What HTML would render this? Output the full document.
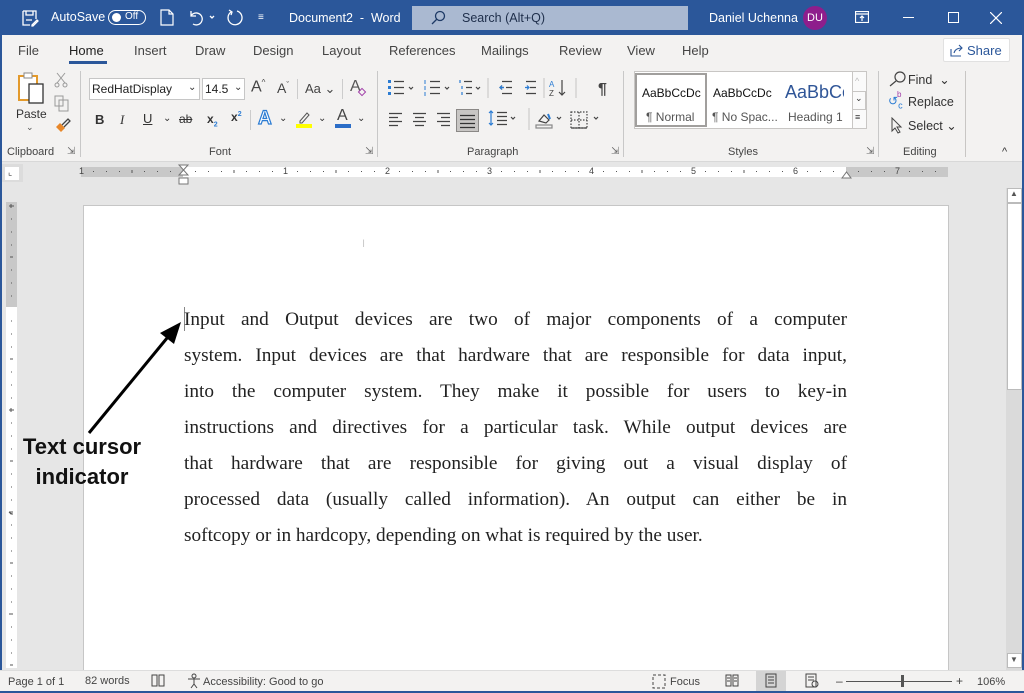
<!DOCTYPE html>
<html><head><meta charset="utf-8">
<style>
*{margin:0;padding:0;box-sizing:border-box}
body{width:1024px;height:693px;position:relative;overflow:hidden;background:#e6e6e6;font-family:"Liberation Sans",sans-serif;color:#333}
.a{position:absolute}
.t{position:absolute;white-space:nowrap}
#title{left:0;top:0;width:1024px;height:35px;background:#2b579a;color:#fff;font-size:12px}
#ribbon{left:0;top:35px;width:1024px;height:127px;background:#f3f2f1;border-bottom:1px solid #d8d8d8}
.tab{position:absolute;top:8px;font-size:13px;color:#444}
.grp{position:absolute;top:146px;font-size:11px;color:#444}
.sep{position:absolute;top:71px;width:1px;height:86px;background:#c8c8c8}
.line{position:absolute;left:184px;width:663px;font-family:"Liberation Serif",serif;font-size:19.3px;color:#222;text-align:justify;text-align-last:justify;white-space:nowrap;height:24px;line-height:24px}
</style></head><body>
<div id="title" class="a">
 <svg class="a" style="left:21px;top:9px" width="18" height="18" viewBox="0 0 18 18" fill="none" stroke="#fff" stroke-width="1.3"><path d="M2 2h13v8M2 2v14h7M5 2v4h7V2M5 11h6M11 16l5-5 1 1-5 5h-1z"/></svg>
 <div class="t" style="left:51px;top:10px;font-size:12.5px">AutoSave</div>
 <div class="a" style="left:108px;top:10px;width:38px;height:15px;border:1px solid #fff;border-radius:8px"></div>
 <div class="a" style="left:112px;top:13px;width:9px;height:9px;background:#fff;border-radius:50%"></div>
 <div class="t" style="left:125px;top:11px;font-size:10px">Off</div>
 <svg class="a" style="left:160px;top:9px" width="14" height="17" viewBox="0 0 14 17" fill="none" stroke="#fff" stroke-width="1.2"><path d="M1 1h8l4 4v11H1zM9 1v4h4"/></svg>
 <svg class="a" style="left:187px;top:9px" width="40" height="17" viewBox="0 0 40 17" fill="none" stroke="#fff" stroke-width="1.3"><path d="M4 2v5h5M4 7a6 6 0 1 1 2 8"/><path d="M23 7l2 2 2-2" /></svg>
 <svg class="a" style="left:226px;top:9px" width="18" height="18" viewBox="0 0 18 18" fill="none" stroke="#fff" stroke-width="1.3"><path d="M11 2a7 7 0 1 1-6 1"/><path d="M3 1l3 2-1 3"/></svg>
 <div class="t" style="left:258px;top:12px;font-size:10px">&#8801;</div>
 <div class="t" style="left:289px;top:11px;font-size:12.5px">Document2&nbsp; - &nbsp;Word</div>
 <div class="a" style="left:412px;top:6px;width:276px;height:24px;background:#aab9d1"></div>
 <svg class="a" style="left:430px;top:10px" width="16" height="16" viewBox="0 0 16 16" fill="none" stroke="#1e3a66" stroke-width="1.3"><circle cx="10" cy="6" r="4.5"/><path d="M7 9l-5 5"/></svg>
 <div class="t" style="left:462px;top:11px;font-size:12.5px;color:#1e2e4a">Search (Alt+Q)</div>
 <div class="t" style="left:709px;top:11px;font-size:12.5px">Daniel Uchenna</div>
 <div class="a" style="left:803px;top:6px;width:24px;height:24px;border-radius:50%;background:#8e1e8c;color:#fff;font-size:11px;text-align:center;line-height:24px">DU</div>
 <svg class="a" style="left:855px;top:11px" width="14" height="12" viewBox="0 0 14 12" fill="none" stroke="#fff" stroke-width="1.2"><rect x="0.5" y="0.5" width="13" height="11"/><path d="M0 3h14M7 10V5M5 7l2-2 2 2"/></svg>
 <div class="a" style="left:903px;top:17px;width:11px;height:1px;background:#fff"></div>
 <div class="a" style="left:948px;top:12px;width:11px;height:11px;border:1px solid #fff"></div>
 <svg class="a" style="left:990px;top:12px" width="12" height="12" viewBox="0 0 12 12" stroke="#fff" stroke-width="1.2"><path d="M0 0l12 12M12 0L0 12"/></svg>
</div>
<div id="ribbon" class="a">
 <div class="tab" style="left:18px">File</div>
 <div class="tab" style="left:69px;color:#222">Home</div>
 <div class="a" style="left:69px;top:26px;width:38px;height:3px;background:#2b579a"></div>
 <div class="tab" style="left:134px">Insert</div>
 <div class="tab" style="left:195px">Draw</div>
 <div class="tab" style="left:253px">Design</div>
 <div class="tab" style="left:322px">Layout</div>
 <div class="tab" style="left:389px">References</div>
 <div class="tab" style="left:481px">Mailings</div>
 <div class="tab" style="left:559px">Review</div>
 <div class="tab" style="left:627px">View</div>
 <div class="tab" style="left:682px">Help</div>
 <div class="a" style="left:943px;top:3px;width:67px;height:24px;background:#fff;border:1px solid #e1e1e1;border-radius:2px"></div>
 <svg class="a" style="left:950px;top:9px" width="14" height="13" viewBox="0 0 14 13" fill="none" stroke="#2b579a" stroke-width="1.1"><path d="M1 5v7h10M4 9c1-4 4-5 8-5M9 1l3 3-3 3"/></svg>
 <div class="t" style="left:967px;top:8px;font-size:13px;color:#2b579a">Share</div>
</div>
<!-- clipboard -->
<svg class="a" style="left:17px;top:72px" width="30" height="34" viewBox="0 0 30 34"><rect x="2" y="4" width="18" height="24" fill="#fff" stroke="#e39a2c" stroke-width="2"/><rect x="7" y="1" width="8" height="5" fill="#fff" stroke="#888"/><rect x="12" y="12" width="14" height="19" fill="#fff" stroke="#333" stroke-width="1.3"/></svg>
<div class="t" style="left:16px;top:107px;font-size:12px;color:#333">Paste</div>
<div class="t" style="left:26px;top:122px;font-size:9px;color:#555">&#8964;</div>
<svg class="a" style="left:54px;top:72px" width="14" height="16" viewBox="0 0 14 16" fill="none" stroke="#999"><path d="M3 1l8 10M11 1L3 11"/><circle cx="3" cy="13" r="2"/><circle cx="11" cy="13" r="2"/></svg>
<svg class="a" style="left:54px;top:95px" width="16" height="17" viewBox="0 0 16 17" fill="none" stroke="#999"><rect x="1" y="1" width="8" height="10"/><path d="M5 5h9v11H5z"/></svg>
<svg class="a" style="left:54px;top:118px" width="17" height="16" viewBox="0 0 17 16"><path d="M2 9l5 5 4-4-5-5z" fill="#e8872a"/><path d="M8 7l6-6 2 2-6 6" stroke="#444" fill="none" stroke-width="1.3"/></svg>
<div class="grp" style="left:7px">Clipboard</div>
<div class="t" style="left:67px;top:146px;font-size:10px;color:#666">&#8690;</div>
<div class="sep" style="left:80px"></div>
<!-- font -->
<div class="a" style="left:89px;top:78px;width:111px;height:22px;background:#fff;border:1px solid #c6c6c6"></div>
<div class="t" style="left:92px;top:82px;font-size:12px;color:#222">RedHatDisplay</div>
<div class="t" style="left:188px;top:82px;font-size:10px">&#8964;</div>
<div class="a" style="left:202px;top:78px;width:43px;height:22px;background:#fff;border:1px solid #c6c6c6"></div>
<div class="t" style="left:205px;top:82px;font-size:12px;color:#222">14.5</div>
<div class="t" style="left:234px;top:82px;font-size:10px">&#8964;</div>
<div class="t" style="left:251px;top:78px;font-size:16px;color:#444">A<sup style="font-size:8px">^</sup></div>
<div class="t" style="left:277px;top:80px;font-size:14px;color:#444">A<sup style="font-size:8px">ˇ</sup></div>
<div class="a" style="left:297px;top:79px;width:1px;height:20px;background:#ccc"></div>
<div class="t" style="left:305px;top:81px;font-size:13px;color:#444">Aa &#8964;</div>
<div class="a" style="left:342px;top:79px;width:1px;height:20px;background:#ccc"></div>
<div class="t" style="left:350px;top:78px;font-size:16px;color:#555">A</div>
<div class="a" style="left:359px;top:89px;width:6px;height:6px;border:1.5px solid #a03ea8;transform:rotate(45deg)"></div>
<div class="t" style="left:95px;top:112px;font-size:13px;font-weight:bold;color:#333">B</div>
<div class="t" style="left:120px;top:112px;font-size:13px;font-style:italic;font-family:'Liberation Serif',serif">I</div>
<div class="t" style="left:143px;top:111px;font-size:13px;text-decoration:underline">U</div>
<div class="t" style="left:163px;top:113px;font-size:10px">&#8964;</div>
<div class="t" style="left:179px;top:112px;font-size:12px;text-decoration:line-through">ab</div>
<div class="t" style="left:207px;top:112px;font-size:12px;font-weight:bold">x<sub style="font-size:7px;color:#2b7cd3">2</sub></div>
<div class="t" style="left:231px;top:110px;font-size:12px;font-weight:bold">x<sup style="font-size:7px;color:#2b7cd3">2</sup></div>
<div class="a" style="left:250px;top:110px;width:1px;height:20px;background:#ccc"></div>
<div class="t" style="left:258px;top:108px;font-size:19px;font-weight:bold;color:#fff;-webkit-text-stroke:1.2px #2b7cd3">A</div>
<div class="t" style="left:279px;top:113px;font-size:10px">&#8964;</div>
<svg class="a" style="left:296px;top:110px" width="18" height="18" viewBox="0 0 18 18"><path d="M4 11l7-8 2 2-7 8H4z" fill="none" stroke="#555"/><rect x="0" y="14" width="16" height="4" fill="#ffff00"/></svg>
<div class="t" style="left:318px;top:113px;font-size:10px">&#8964;</div>
<div class="t" style="left:337px;top:107px;font-size:16px;color:#444">A</div>
<div class="a" style="left:335px;top:124px;width:16px;height:4px;background:#2b6dc7"></div>
<div class="t" style="left:357px;top:113px;font-size:10px">&#8964;</div>
<div class="grp" style="left:209px">Font</div>
<div class="t" style="left:365px;top:146px;font-size:10px;color:#666">&#8690;</div>
<div class="sep" style="left:377px"></div>
<!-- paragraph -->
<svg class="a" style="left:386px;top:78px" width="240" height="52" viewBox="0 0 240 52" fill="none" stroke="#444" stroke-width="1.2">
 <rect x="2" y="2" width="3" height="3" fill="#2b7cd3" stroke="none"/><rect x="2" y="8" width="3" height="3" fill="#2b7cd3" stroke="none"/><rect x="2" y="14" width="3" height="3" fill="#2b7cd3" stroke="none"/>
 <path d="M8 3.5h10M8 9.5h10M8 15.5h10M23 9l2 2 2-2"/>
 <path d="M44 3.5h10M44 9.5h10M44 15.5h10M59 9l2 2 2-2"/><path d="M39 2v4M39 8v4M39 14v4" stroke="#2b7cd3" stroke-width="1"/>
 <path d="M78 3.5h8M80 9.5h6M80 15.5h6M90 9l2 2 2-2"/><path d="M74 2v3M76 8v3M76 14v3" stroke="#2b7cd3"/>
 <path d="M102 0v20" stroke="#ccc"/>
 <path d="M126 3.5h-10M126 9.5h-6M126 15.5h-10M114 9.5h4M116 7.5l-2 2 2 2" /><path d="M114 9.5h4M116 7.5l-2 2 2 2" stroke="#2b7cd3"/>
 <path d="M150 3.5h-10M150 9.5h-6M150 15.5h-10"/><path d="M139 9.5h4M141 7.5l2 2-2 2" stroke="#2b7cd3"/>
 <path d="M158 0v20" stroke="#ccc"/>
 <text x="163" y="9" font-size="8" fill="#2b7cd3" stroke="none" font-family="Liberation Sans">A</text><text x="163" y="18" font-size="8" fill="#444" stroke="none" font-family="Liberation Sans">Z</text>
 <path d="M176 2v15M173 14l3 3 3-3"/>
 <path d="M190 0v20" stroke="#ccc"/>
 <text x="212" y="16" font-size="16" fill="#444" stroke="none" font-family="Liberation Sans" font-weight="bold">¶</text>
 <path d="M3 35.5h13M3 39.5h9M3 43.5h13M3 47.5h9"/>
 <path d="M27 35.5h13M29 39.5h9M27 43.5h13M29 47.5h9"/>
 <path d="M51 35.5h13M55 39.5h9M51 43.5h13M55 47.5h9"/>
</svg>
<div class="a" style="left:456px;top:109px;width:23px;height:23px;background:#c8c6c4;border:1px solid #8a8886"></div>
<svg class="a" style="left:459px;top:113px" width="18" height="16" fill="none" stroke="#333" stroke-width="1.2"><path d="M1 2.5h15M1 6.5h15M1 10.5h15M1 14.5h15"/></svg>
<svg class="a" style="left:486px;top:108px" width="140" height="24" viewBox="0 0 140 24" fill="none" stroke="#444" stroke-width="1.2">
 <path d="M11 4.5h10M11 8.5h10M11 12.5h10M11 16.5h10M25 9l2 2 2-2"/><path d="M5 3v14M3 5l2-2 2 2M3 15l2 2 2-2" stroke="#2b7cd3"/>
 <path d="M43 0v22" stroke="#ccc"/>
 <path d="M53 13l5-6 5 5-3 3z"/><rect x="50" y="17" width="16" height="3" stroke="#888"/><path d="M62 6l2 5" stroke="#2b7cd3" stroke-width="2"/>
 <path d="M71 9l2 2 2-2"/>
 <path d="M85 4h16v16H85z" stroke-dasharray="1.5 1.5"/><path d="M93 4v16M85 12h16" stroke-dasharray="1.5 1.5"/><path d="M85 20h16"/>
 <path d="M108 9l2 2 2-2"/>
</svg>
<div class="grp" style="left:467px">Paragraph</div>
<div class="t" style="left:611px;top:146px;font-size:10px;color:#666">&#8690;</div>
<div class="sep" style="left:623px"></div>
<!-- styles -->
<div class="a" style="left:634px;top:71px;width:233px;height:58px;background:#fff;border:1px solid #c8c6c4"></div>
<div class="a" style="left:635px;top:73px;width:72px;height:54px;border:2px solid #a19f9d;background:#fff"></div>
<div class="t" style="left:642px;top:86px;font-size:12px;color:#111">AaBbCcDc</div>
<div class="t" style="left:646px;top:110px;font-size:12px;color:#555">¶ Normal</div>
<div class="t" style="left:713px;top:86px;font-size:12px;color:#111">AaBbCcDc</div>
<div class="t" style="left:712px;top:110px;font-size:12px;color:#555">¶ No Spac...</div>
<div class="t" style="left:785px;top:82px;font-size:18px;color:#2f5597;width:59px;overflow:hidden">AaBbCc</div>
<div class="t" style="left:788px;top:110px;font-size:12px;color:#555">Heading 1</div>
<div class="a" style="left:852px;top:72px;width:14px;height:56px;border-left:1px solid #c8c6c4;background:#fafafa"></div>
<div class="a" style="left:852px;top:91px;width:14px;height:19px;border:1px solid #c8c6c4"></div>
<div class="t" style="left:855px;top:76px;font-size:9px;color:#bbb">^</div>
<div class="t" style="left:855px;top:93px;font-size:9px">&#8964;</div>
<div class="t" style="left:855px;top:112px;font-size:9px">&#8801;</div>
<div class="grp" style="left:728px">Styles</div>
<div class="t" style="left:866px;top:146px;font-size:10px;color:#666">&#8690;</div>
<div class="sep" style="left:878px"></div>
<!-- editing -->
<svg class="a" style="left:889px;top:71px" width="18" height="16" viewBox="0 0 18 16" fill="none" stroke="#444" stroke-width="1.2"><circle cx="11" cy="6" r="5"/><path d="M7 10l-6 5"/></svg>
<div class="t" style="left:908px;top:72px;font-size:12.5px">Find &nbsp;&#8964;</div>
<div class="t" style="left:888px;top:94px;font-size:12px;color:#2b7cd3">&#8634;<sub style="font-size:9px">c</sub></div>
<div class="t" style="left:897px;top:90px;font-size:8px;color:#a03ea8">b</div>
<div class="t" style="left:908px;top:95px;font-size:12.5px">Replace</div>
<svg class="a" style="left:890px;top:117px" width="14" height="17" viewBox="0 0 14 17" fill="none" stroke="#444"><path d="M2 1v13l3-3 3 5 2-1-3-5h4z"/></svg>
<div class="t" style="left:908px;top:118px;font-size:12.5px">Select &#8964;</div>
<div class="grp" style="left:903px">Editing</div>
<div class="a" style="left:965px;top:71px;width:1px;height:86px;background:#c8c6c4"></div>
<div class="t" style="left:1002px;top:146px;font-size:11px">^</div>
<!-- ruler -->
<div class="a" style="left:0;top:163px;width:1024px;height:18px;background:#e6e6e6"></div>
<div class="a" style="left:2px;top:164px;width:21px;height:18px;background:#dcdcdc"></div>
<div class="a" style="left:5px;top:167px;width:14px;height:13px;background:#fff"></div>
<div class="t" style="left:8px;top:167px;font-size:9px;color:#444">&#8990;</div>
<div class="a" style="left:81px;top:167px;width:102px;height:10px;background:#c8c8c8"></div>
<div class="a" style="left:183px;top:167px;width:663px;height:10px;background:#fff"></div>
<div class="a" style="left:846px;top:167px;width:102px;height:10px;background:#c8c8c8"></div>
<div class="t" style="left:79px;top:166px;font-size:9px;color:#444;letter-spacing:0">1</div>
<div class="t" style="left:283px;top:166px;font-size:9px;color:#444">1</div>
<div class="t" style="left:385px;top:166px;font-size:9px;color:#444">2</div>
<div class="t" style="left:487px;top:166px;font-size:9px;color:#444">3</div>
<div class="t" style="left:589px;top:166px;font-size:9px;color:#444">4</div>
<div class="t" style="left:691px;top:166px;font-size:9px;color:#444">5</div>
<div class="t" style="left:793px;top:166px;font-size:9px;color:#444">6</div>
<div class="t" style="left:895px;top:166px;font-size:9px;color:#444">7</div>
<svg class="a" style="left:80px;top:167px" width="870" height="10"><g stroke="#555">
<path d="M13 4.5h1M26 4.5h1M39 4.5h1M52 3v3M64 4.5h1M77 4.5h1M90 4.5h1M115 4.5h1M128 4.5h1M141 4.5h1M154 3v3M166 4.5h1M179 4.5h1M192 4.5h1M217 4.5h1M230 4.5h1M243 4.5h1M256 3v3M268 4.5h1M281 4.5h1M294 4.5h1M319 4.5h1M332 4.5h1M345 4.5h1M358 3v3M370 4.5h1M383 4.5h1M396 4.5h1M421 4.5h1M434 4.5h1M447 4.5h1M460 3v3M472 4.5h1M485 4.5h1M498 4.5h1M523 4.5h1M536 4.5h1M549 4.5h1M562 3v3M574 4.5h1M587 4.5h1M600 4.5h1M625 4.5h1M638 4.5h1M651 4.5h1M664 3v3M676 4.5h1M689 4.5h1M702 4.5h1M727 4.5h1M740 4.5h1M753 4.5h1M778 4.5h1M791 4.5h1M804 4.5h1M829 4.5h1M842 4.5h1M855 4.5h1"/></g></svg>
<svg class="a" style="left:178px;top:164px" width="12" height="22" fill="#fff" stroke="#777"><path d="M1 1h9L5.5 6zM5.5 6L1 11h9z"/><rect x="1" y="14" width="9" height="6"/></svg>
<svg class="a" style="left:841px;top:170px" width="12" height="9" fill="#fff" stroke="#777"><path d="M1 8L5.5 2 10 8z"/></svg>
<!-- vertical ruler -->
<div class="a" style="left:6px;top:202px;width:11px;height:466px;background:#fff"></div>
<div class="a" style="left:6px;top:202px;width:11px;height:105px;background:#c8c8c8"></div>
<svg class="a" style="left:6px;top:202px" width="11" height="466"><g stroke="#555"><path d="M5 17h1M5 30h1M5 43h1M4 55h3M5 68h1M5 81h1M5 94h1M5 119h1M5 132h1M5 145h1M4 157h3M5 170h1M5 183h1M5 196h1M5 221h1M5 234h1M5 247h1M4 259h3M5 272h1M5 285h1M5 298h1M5 323h1M5 336h1M5 349h1M4 361h3M5 374h1M5 387h1M5 400h1M5 425h1M5 438h1M5 451h1M4 463h3"/><path d="M3 4h5M5 2v4M3 208h5M5 206v4M3 310h4M3 310l2 2h2M3 412h4"/></g></svg>
<!-- page -->
<div class="a" style="left:83px;top:205px;width:866px;height:466px;background:#fff;border:1px solid #c6c6c6;border-bottom:none"></div>
<div class="t" style="left:362px;top:238px;font-size:11px;color:#ccc">I</div>
<div class="a" style="left:184px;top:307px;width:1px;height:24px;background:#888"></div>
<div class="line" style="top:308px">Input and Output devices are two of major components of a computer</div>
<div class="line" style="top:344px">system. Input devices are that hardware that are responsible for data input,</div>
<div class="line" style="top:380px">into the computer system. They make it possible for users to key-in</div>
<div class="line" style="top:416px">instructions and directives for a particular task. While output devices are</div>
<div class="line" style="top:452px">that hardware that are responsible for giving out a visual display of</div>
<div class="line" style="top:488px">processed data (usually called information). An output can either be in</div>
<div class="line" style="top:524px;text-align:left;text-align-last:left">softcopy or in hardcopy, depending on what is required by the user.</div>
<!-- annotation -->
<svg class="a" style="left:80px;top:315px" width="110" height="125"><path d="M9 118L92 17" stroke="#000" stroke-width="3"/><path d="M101 7L80 18l14 11z" fill="#000"/></svg>
<div class="t" style="left:20px;top:432px;width:124px;text-align:center;font-size:22px;font-weight:bold;color:#111;line-height:30px">Text cursor<br>indicator</div>
<!-- scrollbar -->
<div class="a" style="left:1006px;top:188px;width:16px;height:482px;background:#dadada"></div>
<div class="a" style="left:1007px;top:188px;width:15px;height:15px;background:#fff;border:1px solid #bbb"></div>
<div class="t" style="left:1010px;top:189px;font-size:8px;color:#555">&#9650;</div>
<div class="a" style="left:1007px;top:203px;width:15px;height:187px;background:#fff;border:1px solid #bbb"></div>
<div class="a" style="left:1007px;top:653px;width:15px;height:15px;background:#fff;border:1px solid #bbb"></div>
<div class="t" style="left:1010px;top:655px;font-size:8px;color:#555">&#9660;</div>
<div class="a" style="left:0;top:35px;width:2px;height:658px;background:#2b579a"></div>
<div class="a" style="left:1022px;top:35px;width:2px;height:658px;background:#2b579a"></div>
<!-- status -->
<div class="a" style="left:0;top:670px;width:1024px;height:23px;background:#f3f2f1;border-top:1px solid #ddd;border-bottom:2px solid #2b579a"></div>
<div class="t" style="left:8px;top:676px;font-size:11px;color:#444">Page 1 of 1</div>
<div class="t" style="left:85px;top:675px;font-size:11px;color:#444">82 words</div>
<svg class="a" style="left:151px;top:674px" width="14" height="14" fill="none" stroke="#444"><path d="M1 1h5v11H1zM8 1h5v11H8z"/></svg>
<svg class="a" style="left:186px;top:673px" width="16" height="16" fill="none" stroke="#444"><circle cx="8" cy="3" r="2"/><path d="M2 6h12M8 6v5l-3 4M8 11l3 4"/></svg>
<div class="t" style="left:203px;top:676px;font-size:11px;color:#444">Accessibility: Good to go</div>
<svg class="a" style="left:652px;top:674px" width="14" height="15" fill="none" stroke="#444"><path d="M1 1h12v13H1z" stroke-dasharray="3 2"/></svg>
<div class="t" style="left:670px;top:676px;font-size:11px;color:#444">Focus</div>
<svg class="a" style="left:725px;top:674px" width="14" height="13" fill="none" stroke="#444"><path d="M1 1h5v11H1zM8 1h5v11H8zM2 4h3M2 7h3M9 4h3M9 7h3"/></svg>
<div class="a" style="left:756px;top:671px;width:30px;height:20px;background:#d4d4d4"></div>
<svg class="a" style="left:765px;top:673px" width="12" height="15" fill="none" stroke="#444"><path d="M1 1h10v13H1zM3 4h6M3 7h6M3 10h6"/></svg>
<svg class="a" style="left:805px;top:673px" width="14" height="16" fill="none" stroke="#444"><path d="M1 1h10v13H1zM3 4h6M3 7h6"/><circle cx="10" cy="11" r="3"/></svg>
<div class="t" style="left:836px;top:674px;font-size:12px;color:#444">&#8211;</div>
<div class="a" style="left:846px;top:681px;width:106px;height:1px;background:#555"></div>
<div class="a" style="left:901px;top:675px;width:3px;height:12px;background:#555"></div>
<div class="t" style="left:956px;top:674px;font-size:12px;color:#444">+</div>
<div class="t" style="left:977px;top:676px;font-size:11px;color:#444">106%</div>
</body></html>
